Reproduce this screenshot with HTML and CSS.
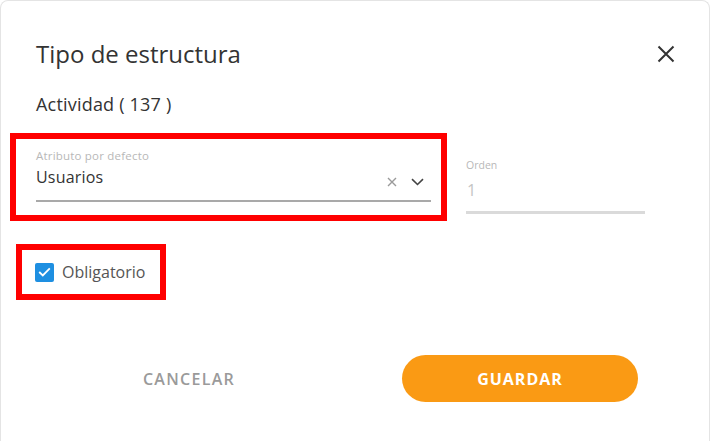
FILE: index.html
```html
<!DOCTYPE html>
<html lang="es">
<head>
<meta charset="utf-8">
<link rel="stylesheet" href="styles.css">
</head>
<body>
<div class="dialog">
  <div class="header">
    <h1 class="title">Tipo de estructura</h1>
    <button class="close" aria-label="Cerrar">
      <svg width="18" height="18" viewBox="0 0 18 18"><path d="M1.5 1.5L16.5 16.5M16.5 1.5L1.5 16.5" stroke="#333" stroke-width="2" fill="none"/></svg>
    </button>
  </div>
  <div class="subtitle">Actividad ( 137 )</div>
  <div class="fields">
    <div class="hl hl-select">
      <div class="label label-main">Atributo por defecto</div>
      <div class="select">
        <span class="value">Usuarios</span>
        <span class="icons">
          <svg width="10" height="10" viewBox="0 0 10 10"><path d="M1 1L9 9M9 1L1 9" stroke="#9a9a9a" stroke-width="1.4" fill="none"/></svg>
          <svg width="13" height="8" viewBox="0 0 13 8"><path d="M1 1.2L6.5 6.5L12 1.2" stroke="#444" stroke-width="1.6" fill="none"/></svg>
        </span>
      </div>
    </div>
    <div class="order">
      <div class="label label-order">Orden</div>
      <div class="order-value">1</div>
    </div>
  </div>
  <div class="hl hl-check">
    <span class="checkbox">
      <svg width="13" height="10" viewBox="0 0 13 10"><path d="M1.2 5L4.8 8.4L11.8 1.4" stroke="#fff" stroke-width="1.8" fill="none"/></svg>
    </span>
    <span class="check-label">Obligatorio</span>
  </div>
  <div class="actions">
    <button class="btn-cancel">CANCELAR</button>
    <button class="btn-save">GUARDAR</button>
  </div>
</div>
</body>
</html>
```
FILE: styles.css
```css
html, body { margin: 0; padding: 0; background: #fff; }
body { font-family: "Open Sans", "Noto Sans", sans-serif; color: #333; }
.dialog {
  width: 710px;
  height: 441px;
  box-sizing: border-box;
  border: 1px solid #e4e4e4;
  border-bottom: none;
  border-radius: 8px 8px 0 0;
  background: #fff;
}
.header {
  display: flex;
  justify-content: space-between;
  align-items: center;
  padding: 38px 34px 0 35px;
}
.title { margin: 0; font-size: 24px; font-weight: 400; line-height: 30px; color: #333; letter-spacing: 0; }
.close { border: none; background: none; padding: 0; width: 18px; height: 18px; display: flex; }
.subtitle { margin: 24px 0 0 35px; font-size: 18px; line-height: 22px; color: #333; letter-spacing: 0.2px; }
.fields { display: flex; align-items: flex-start; margin: 18px 0 0 9px; }
.hl { border: 6px solid #ff0000; box-sizing: border-box; }
.hl-select { width: 437px; height: 88px; padding: 10px 10px 0 20px; }
.label { line-height: 14px; color: #b8b8b8; }
.label-main { font-size: 11.5px; letter-spacing: 0.2px; }
.label-order { font-size: 10.5px; }
.select {
  display: flex;
  justify-content: space-between;
  align-items: flex-start;
  height: 39px;
  border-bottom: 2px solid #a9a9a9;
  box-sizing: border-box;
}
.value { font-size: 16px; line-height: 22px; color: #333; letter-spacing: 0.2px; padding-top: 3px; }
.icons { display: flex; align-items: center; gap: 14px; padding-right: 7px; height: 10px; margin-top: 14px; }
.order { margin-left: 19px; width: 179px; padding-top: 25px; }
.order-value {
  font-size: 16px;
  color: #c4c4c4;
  height: 39px;
  line-height: 30px;
  border-bottom: 3px solid #dadada;
  box-sizing: border-box;
  margin-top: 3px;
  padding-left: 1px;
}
.hl-check {
  display: flex;
  align-items: center;
  gap: 8px;
  width: 150px;
  height: 56px;
  margin: 23px 0 0 15px;
  padding-left: 13px;
}
.checkbox {
  width: 19px;
  height: 19px;
  border-radius: 2px;
  background: #1e8fe1;
  display: flex;
  align-items: center;
  justify-content: center;
}
.check-label { font-size: 16px; color: #555; letter-spacing: 0; }
.actions {
  display: flex;
  align-items: center;
  margin: 55px 0 0 0;
  padding-left: 97px;
}
.btn-cancel {
  width: 182px;
  border: none;
  background: none;
  font-family: inherit;
  font-size: 16px;
  font-weight: 600;
  color: #9a9a9a;
  letter-spacing: 1.3px;
  padding: 0;
}
.btn-save {
  margin-left: 122px;
  width: 236px;
  height: 47px;
  border: none;
  border-radius: 24px;
  background: #fa9a14;
  color: #fff;
  font-family: inherit;
  font-size: 16px;
  font-weight: 700;
  letter-spacing: 1px;
}
```
